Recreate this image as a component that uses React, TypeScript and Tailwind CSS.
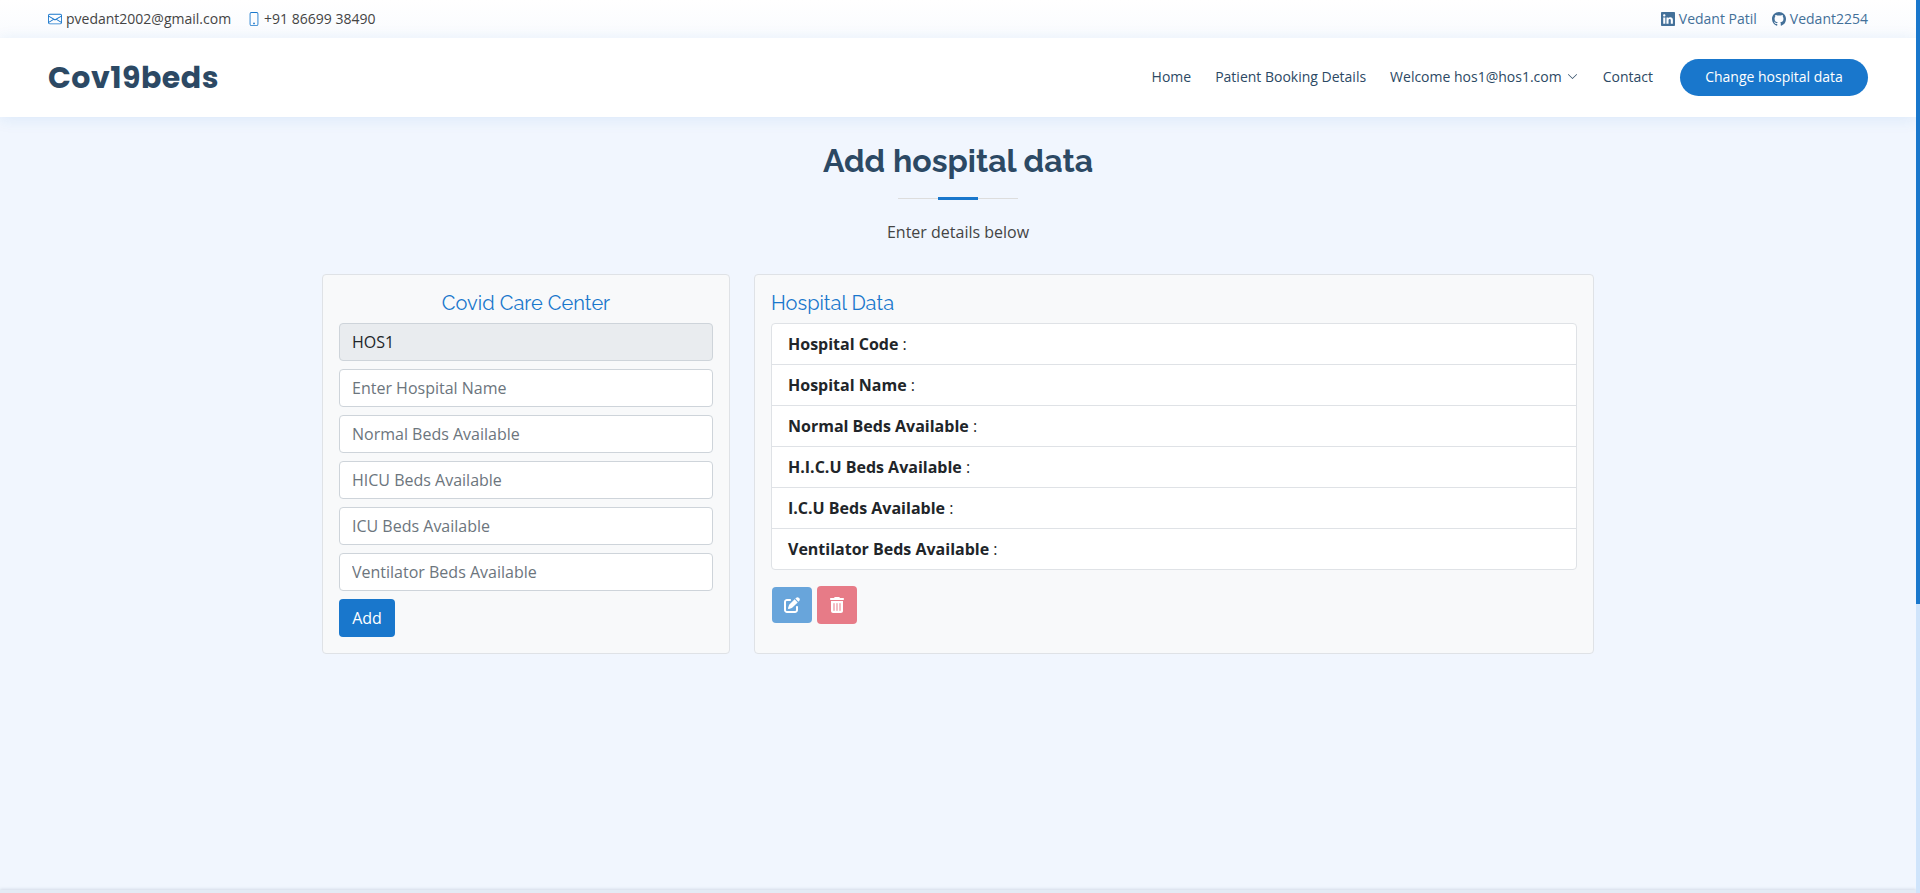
import { BsChevronDown, BsEnvelope, BsGithub, BsLinkedin, BsPhone } from 'react-icons/bs'
import { FaPenToSquare, FaTrashCan } from 'react-icons/fa6'

const placeholders = [
  'Enter Hospital Name',
  'Normal Beds Available',
  'HICU Beds Available',
  'ICU Beds Available',
  'Ventilator Beds Available',
]

const fields = [
  'Hospital Code',
  'Hospital Name',
  'Normal Beds Available',
  'H.I.C.U Beds Available',
  'I.C.U Beds Available',
  'Ventilator Beds Available',
]

function TopBar() {
  return (
    <div className="flex h-[38px] items-center justify-between bg-gradient-to-b from-white to-[#f9fbfe] pl-[48px] pr-[48px] text-sm">
      <div className="flex items-center text-[#444444]">
        <BsEnvelope className="mr-[4px] text-[14px] text-[#1977cc]" />
        <span>pvedant2002@gmail.com</span>
        <BsPhone className="ml-[16px] mr-[3px] text-[14px] text-[#1977cc]" />
        <span>+91 86699 38490</span>
      </div>
      <div className="flex items-center text-[#437099]">
        <BsLinkedin className="mr-[4px] text-[14px]" />
        <span>Vedant Patil</span>
        <BsGithub className="ml-[15px] mr-[4px] text-[14px]" />
        <span>Vedant2254</span>
      </div>
    </div>
  )
}

function NavBar() {
  return (
    <header className="flex h-[79px] items-center justify-between bg-white pl-[48px] pr-[48px] shadow-[0_2px_15px_rgba(25,119,204,0.1)]">
      <div className="font-['Poppins','Inter',sans-serif] text-[30px] font-bold leading-none tracking-[0.5px] text-[#2c4964]">
        Cov19beds
      </div>
      <nav className="flex items-center text-sm text-[#2c4964]">
        <a className="mr-[24px] pb-[2px]">Home</a>
        <a className="mr-[24px] pb-[2px]">Patient Booking Details</a>
        <a className="mr-[25px] flex items-center pb-[2px]">
          Welcome hos1@hos1.com
          <BsChevronDown className="ml-[5px] text-[11px]" />
        </a>
        <a className="pb-[2px]">Contact</a>
        <button className="ml-[27px] h-[37px] w-[188px] rounded-full bg-[#1977cc] pb-[1px] text-sm text-white">
          Change hospital data
        </button>
      </nav>
    </header>
  )
}

function Heading() {
  return (
    <div className="flex flex-col items-center pt-[25px]">
      <h2 className="font-['Raleway','Lato',sans-serif] text-[32px] font-bold leading-[38px] text-[#2c4964]">
        Add hospital data
      </h2>
      <div className="mt-[17px] flex h-[3px] w-[120px] items-center justify-center bg-[linear-gradient(#dddddd,#dddddd)] bg-[length:100%_1px] bg-center bg-no-repeat">
        <div className="h-[3px] w-[40px] bg-[#1977cc]" />
      </div>
      <p className="mt-[20px] text-base leading-[24px] text-[#444444]">Enter details below</p>
    </div>
  )
}

function HospitalForm() {
  return (
    <section className="h-[380px] w-[408px] rounded-[4px] border border-[#dfe2e6] bg-[#f8f9fa] px-[16px] pt-[16px]">
      <h5 className="text-center font-['Raleway','Lato',sans-serif] text-[20px] leading-[24px] text-[#1977cc]">
        Covid Care Center
      </h5>
      <div className="mt-[8px] flex h-[38px] items-center rounded-[4px] border border-[#ced4da] bg-[#e9ecef] px-[12px] text-base text-[#212529]">
        HOS1
      </div>
      {placeholders.map((text) => (
        <input
          key={text}
          placeholder={text}
          className="mt-[8px] block h-[38px] w-full rounded-[4px] border border-[#ced4da] bg-white px-[12px] text-base text-[#212529] placeholder:text-[#6c757d]"
        />
      ))}
      <button className="mt-[8px] h-[38px] w-[56px] rounded-[4px] bg-[#1977cc] text-base text-white">Add</button>
    </section>
  )
}

function HospitalData() {
  return (
    <section className="h-[380px] w-[840px] rounded-[4px] border border-[#dfe2e6] bg-[#f8f9fa] px-[16px] pt-[16px]">
      <h5 className="font-['Raleway','Lato',sans-serif] text-[20px] leading-[24px] text-[#1977cc]">Hospital Data</h5>
      <ul className="mt-[8px] overflow-hidden rounded-[4px] border border-[#dfe2e6] bg-white">
        {fields.map((label) => (
          <li
            key={label}
            className="flex h-[41px] items-center border-b border-[#dfe2e6] px-[16px] text-base text-[#212529] last:h-[40px] last:border-b-0"
          >
            <b className="font-bold">{label}</b>&nbsp;:
          </li>
        ))}
      </ul>
      <div className="ml-[1px] mt-[16px] flex items-center gap-[5px]">
        <button className="flex h-[36px] w-[40px] items-center justify-center rounded-[4px] bg-[#68a5db] text-white">
          <FaPenToSquare className="text-[16px]" />
        </button>
        <button className="flex h-[38px] w-[40px] items-center justify-center rounded-[4px] bg-[#e77b87] text-white">
          <FaTrashCan className="text-[16px]" />
        </button>
      </div>
    </section>
  )
}

export default function App() {
  return (
    <div className="flex h-[893px] overflow-hidden bg-[#f1f6fe] font-['Open_Sans',sans-serif]">
      <div className="flex min-w-0 flex-1 flex-col">
        <TopBar />
        <NavBar />
        <main className="flex-1">
          <Heading />
          <div className="mt-[30px] flex justify-center gap-[24px]">
            <HospitalForm />
            <HospitalData />
          </div>
        </main>
        <div className="h-[3px] bg-[#e3ebf5] shadow-[0_-1px_3px_rgba(44,73,100,0.15)]" />
      </div>
      <div className="w-[4px] bg-[#cfe4fb]">
        <div className="h-[604px] bg-[#1977cc]" />
      </div>
    </div>
  )
}
